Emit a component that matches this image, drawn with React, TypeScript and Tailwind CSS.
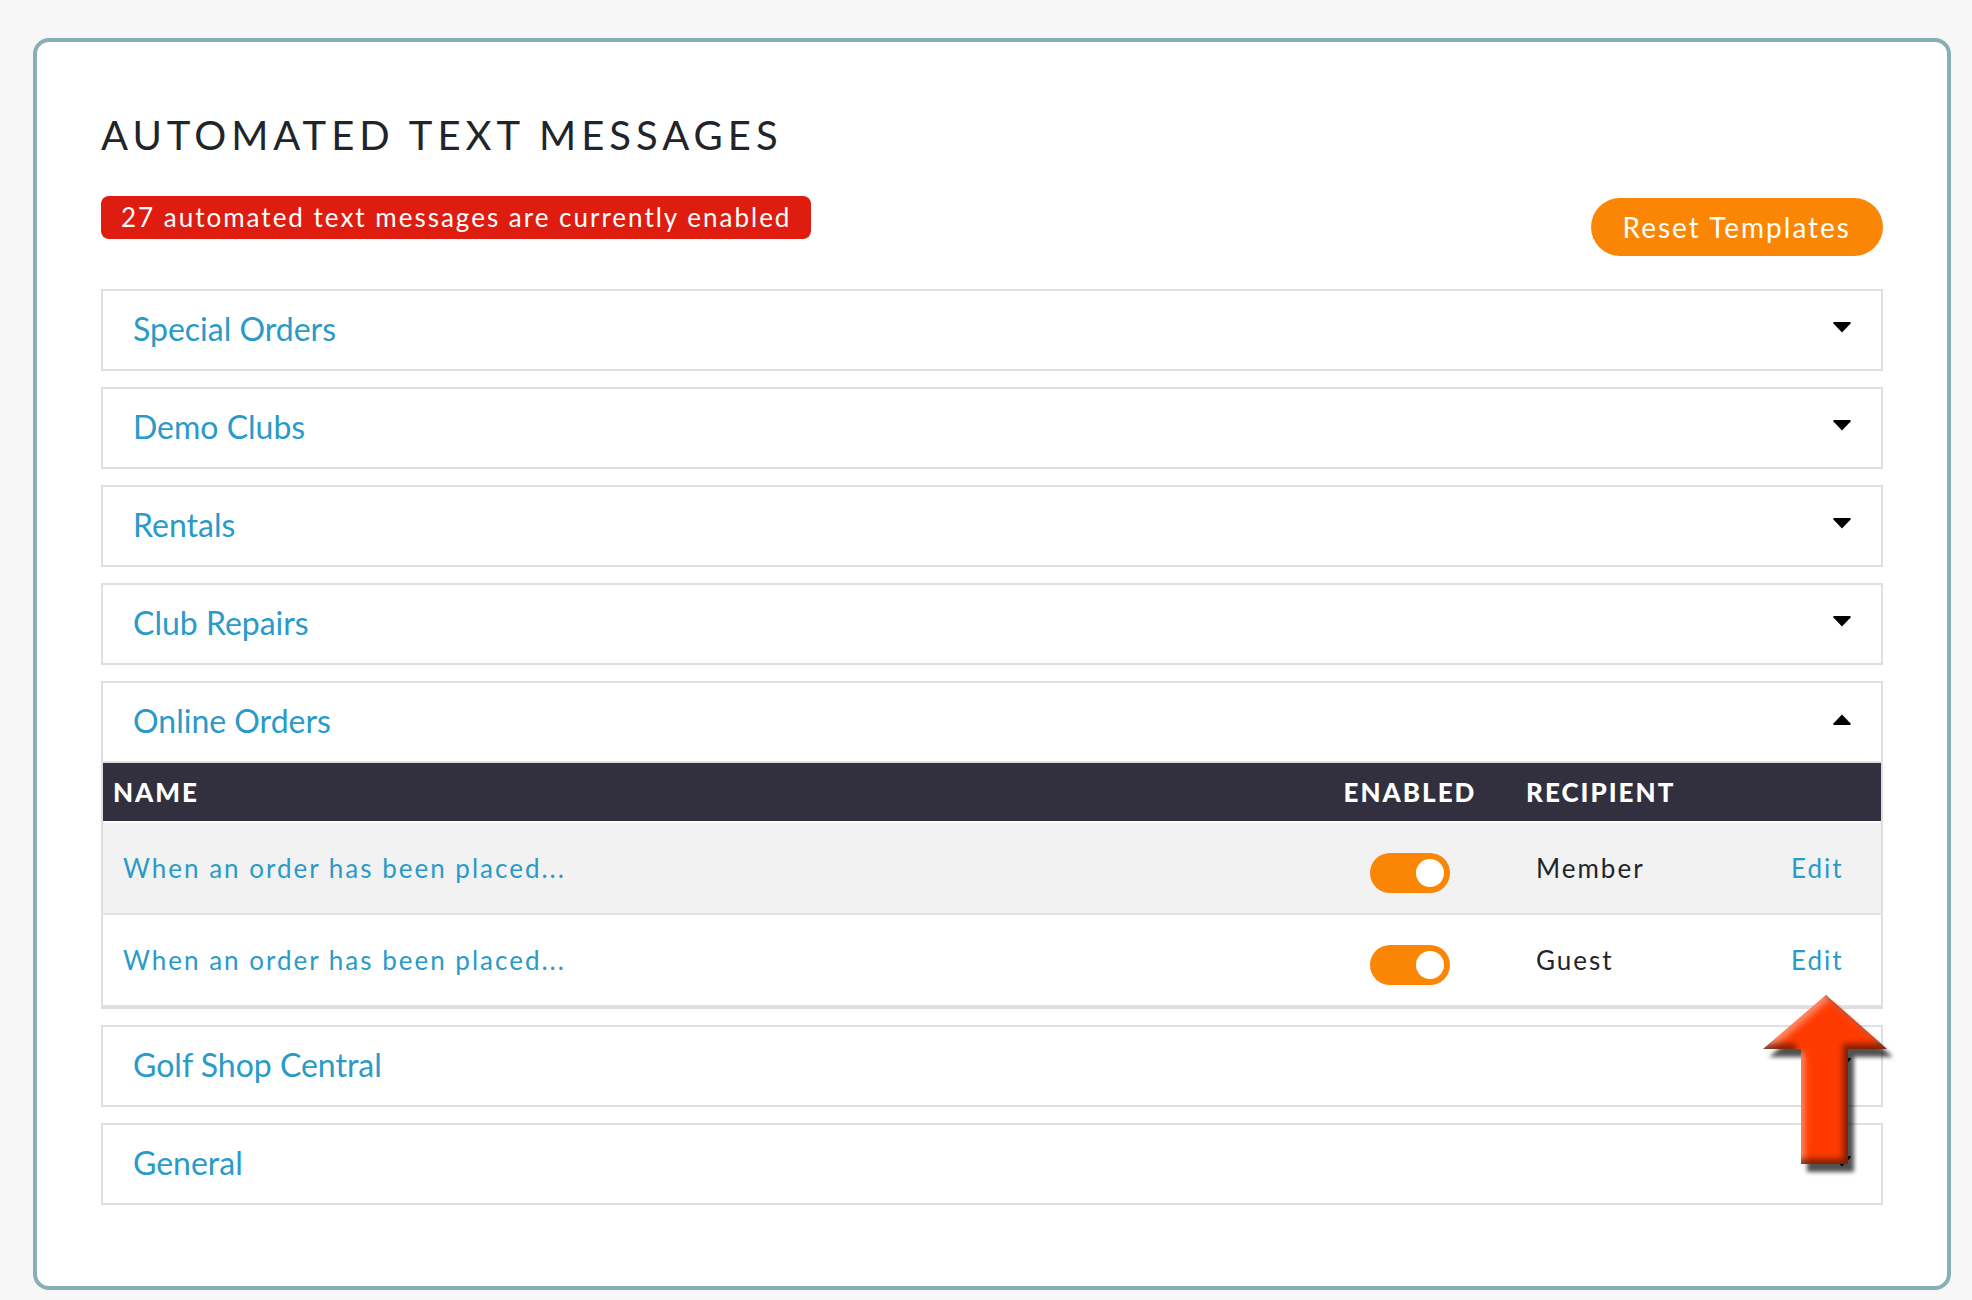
/**
 * Automated Text Messages
 *
 * Settings card with one collapsible section per message group.
 * An open section lists its messages with a toggle and an edit link.
 */

import { useState } from "react";

type Message = { id: string; name: string; recipient: string };
type Section = { title: string; messages: Message[] };

const sections: Section[] = [
  { title: "Special Orders", messages: [] },
  { title: "Demo Clubs", messages: [] },
  { title: "Rentals", messages: [] },
  { title: "Club Repairs", messages: [] },
  {
    title: "Online Orders",
    messages: [
      { id: "placed-member", name: "When an order has been placed...", recipient: "Member" },
      { id: "placed-guest", name: "When an order has been placed...", recipient: "Guest" },
    ],
  },
  { title: "Golf Shop Central", messages: [] },
  { title: "General", messages: [] },
];

const Caret = ({ open }: { open: boolean }) => (
  <svg width="18" height="14" viewBox="0 0 18 14" aria-hidden="true">
    {open ? (
      <path d="M9 0.6 L17.6 9.6 Q18 11 17 11 H1 Q0 11 0.4 9.6 Z" />
    ) : (
      <path d="M9 10.4 L0.4 1.4 Q0 0 1 0 H17 Q18 0 17.6 1.4 Z" />
    )}
  </svg>
);

const arrowShape = "M73 6 L134 60 H95 V175 H48 V60 H10 Z";
const arrowFrame = "M-40 -40 H200 V240 H-40 Z";

// Bevelled red arrow that points at the edit link above it
const PointerArrow = () => (
  <svg
    className="pointer-events-none absolute top-[74px] -right-[22px] z-10"
    width="150"
    height="190"
    viewBox="0 0 150 190"
    aria-hidden="true"
  >
    <defs>
      <clipPath id="arrow-clip">
        <path d={arrowShape} />
      </clipPath>
      <filter id="arrow-shadow" x="-20%" y="-20%" width="140%" height="140%">
        <feGaussianBlur stdDeviation="2" />
      </filter>
      <filter id="arrow-bevel" x="-20%" y="-20%" width="140%" height="140%">
        <feGaussianBlur stdDeviation="3" />
      </filter>
    </defs>
    <path d={arrowShape} transform="translate(6 8)" fill="#000" fillOpacity="0.68" filter="url(#arrow-shadow)" />
    <path d={arrowShape} fill="#ff3a00" />
    <g clipPath="url(#arrow-clip)" fillRule="evenodd">
      <g filter="url(#arrow-bevel)">
        <path d={`${arrowFrame} ${arrowShape}`} transform="translate(4 4)" fill="#fff" fillOpacity="0.4" />
      </g>
      <g filter="url(#arrow-bevel)">
        <path d={`${arrowFrame} ${arrowShape}`} transform="translate(-5 -5)" fill="#000" fillOpacity="0.5" />
      </g>
    </g>
  </svg>
);

const MessageTable = ({ messages }: { messages: Message[] }) => (
  <table className="w-full table-fixed border-separate border-spacing-0 text-left text-[26px] leading-8 tracking-[2px]">
    <colgroup>
      <col />
      <col className="w-[212px]" />
      <col className="w-[255px]" />
      <col className="w-[110px]" />
    </colgroup>
    <thead className="text-white uppercase [&_th]:border-b-2 [&_th]:border-white [&_th]:bg-[#32303f] [&_th]:px-[10px] [&_th]:font-black">
      <tr className="h-[60px]">
        <th>Name</th>
        <th className="text-center">Enabled</th>
        <th>Recipient</th>
        <th aria-label="Actions" />
      </tr>
    </thead>
    <tbody className="[&_td]:border-b-2 [&_td]:border-[#dee2e6]">
      {messages.map((message, index) => (
        <tr key={message.id} className="h-[92px] odd:bg-[#f2f2f2]">
          <td className="px-5">
            <a href="#" className="text-[#2a9ac8]">
              {message.name}
            </a>
          </td>
          <td className="pt-[10px] text-center">
            <input
              type="checkbox"
              defaultChecked
              aria-label={`Enable message for ${message.recipient}`}
              className="relative h-10 w-20 appearance-none rounded-full bg-gray-300 align-middle before:absolute before:top-[6px] before:left-[6px] before:size-7 before:rounded-full before:bg-white checked:bg-[#fb8605] checked:before:left-[46px]"
            />
          </td>
          <td className="px-5 text-[#212529]">{message.recipient}</td>
          <td className="relative px-5">
            <a href="#" className="text-[#2a9ac8]">
              Edit
            </a>
            {index === messages.length - 1 && <PointerArrow />}
          </td>
        </tr>
      ))}
    </tbody>
  </table>
);

const App = () => {
  const [openTitle, setOpenTitle] = useState("Online Orders");

  return (
    <div className="flex min-h-screen flex-col bg-[#f7f7f7] pt-[38px] pr-[21px] pb-[10px] pl-[33px] font-['Lato',sans-serif]">
      <main className="flex-1 rounded-2xl border-4 border-[#8aaeb6] bg-white px-16 pt-[67px] pb-16">
        <h1 className="text-[40px] leading-[52px] tracking-[5px] text-[#212529] uppercase">
          Automated Text Messages
        </h1>

        {/* Status badge and reset action */}
        <div className="mt-[35px] flex items-start justify-between">
          <p className="rounded-lg bg-[#de1d10] px-5 text-[26px] leading-[43px] tracking-[2px] text-white">
            27 automated text messages are currently enabled
          </p>
          <button
            type="button"
            className="mt-[2px] h-[58px] rounded-full bg-[#fb8605] px-8 text-[28px] tracking-[2px] text-white"
          >
            Reset Templates
          </button>
        </div>

        {/* Message groups */}
        <div className="mt-[33px] flex flex-col gap-4">
          {sections.map((section) => {
            const open = section.title === openTitle;
            return (
              <section key={section.title} className="border-x-2 border-t-2 border-x-[#dedfe0] border-t-[#dee2e6]">
                <h2>
                  <button
                    type="button"
                    aria-expanded={open}
                    onClick={() => setOpenTitle(open ? "" : section.title)}
                    className="flex h-20 w-full items-center justify-between border-b-2 border-[#dedede] px-[30px] pb-[2px] text-[32px] text-[#2a9ac8]"
                  >
                    {section.title}
                    <Caret open={open} />
                  </button>
                </h2>
                {open && section.messages.length > 0 && (
                  <div className="border-b-2 border-[#dedede]">
                    <MessageTable messages={section.messages} />
                  </div>
                )}
              </section>
            );
          })}
        </div>
      </main>
    </div>
  );
};

export default App;
